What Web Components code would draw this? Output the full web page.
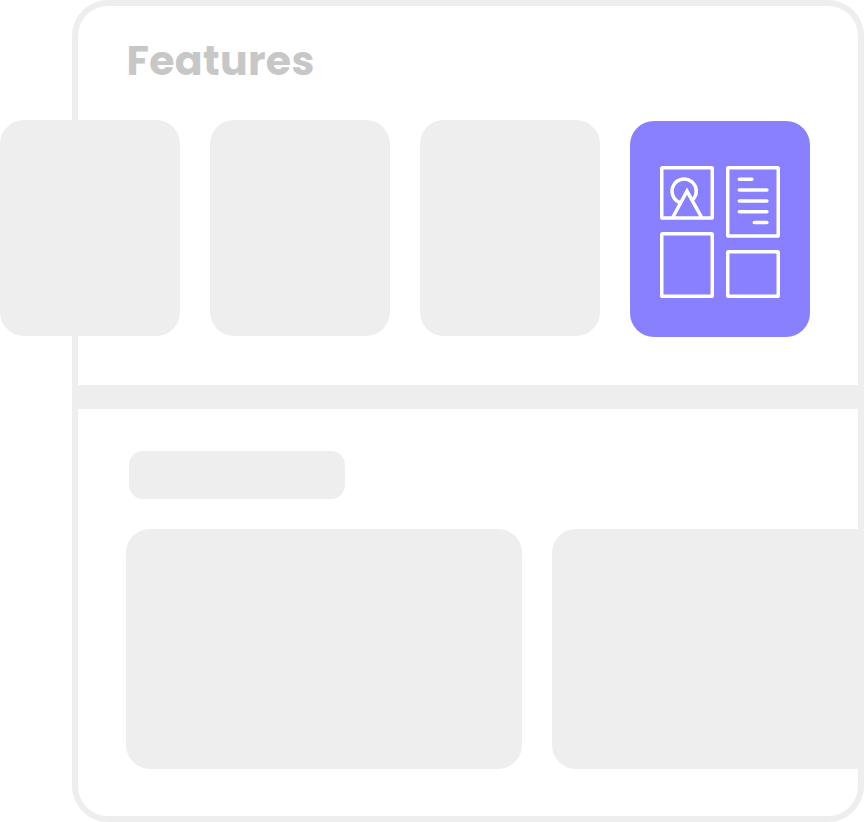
<!DOCTYPE html>
<html lang="en">
<head>
<meta charset="utf-8">
<title>Features</title>
<style>
html,body{margin:0;background:#fff}
body{width:864px;height:822px;overflow:hidden}
</style>
</head>
<body>
<app-frame>
  <feature-section slot="top" heading="Features">
    <place-holder style="--w:180px;--h:216px"></place-holder>
    <place-holder style="--w:180px;--h:216px"></place-holder>
    <place-holder style="--w:180px;--h:216px"></place-holder>
    <feature-card></feature-card>
  </feature-section>
  <content-section slot="bottom">
    <place-holder slot="title" style="--w:216px;--h:48px;--r:14px"></place-holder>
    <place-holder style="--w:396px;--h:240px"></place-holder>
    <place-holder style="--w:396px;--h:240px"></place-holder>
  </content-section>
</app-frame>
<script>
const define = (name, html) => customElements.define(name, class extends HTMLElement {
  connectedCallback() {
    if (this.shadowRoot) return;
    this.attachShadow({ mode: 'open' }).innerHTML = html;
    const title = this.shadowRoot.querySelector('h1');
    if (title) title.textContent = this.getAttribute('heading');
  }
});

define('app-frame', `
<style>
:host{display:flex;flex-direction:column;box-sizing:border-box;width:792px;height:822px;margin-left:72px;border:6px solid #eee;border-radius:36px}
.top{height:379px}
.divider{height:23.6px;background:#eee}
.bottom{flex:1}
</style>
<div class="top"><slot name="top"></slot></div>
<div class="divider"></div>
<div class="bottom"><slot name="bottom"></slot></div>`);

define('place-holder', `
<style>
:host{display:block;flex:none;width:var(--w);height:var(--h);border-radius:var(--r,24px);background:#eee}
</style>`);

define('feature-section', `
<style>
:host{display:flex;flex-direction:column}
h1{margin:30px 0 0 48.4px;height:50px;font:700 41px/50px Poppins,Inter,"Open Sans",sans-serif;letter-spacing:.35px;color:#c7c7c7;white-space:nowrap}
.row{display:flex;gap:30px;margin:34px 0 0 -78px}
</style>
<h1></h1>
<div class="row"><slot></slot></div>`);

define('feature-card', `
<style>
:host{display:flex;flex:none;align-items:center;justify-content:center;width:180px;height:216px;margin-top:1px;border-radius:24px;background:#8980ff}
svg{display:block;width:120px;height:132px;margin-top:5px}
</style>
<svg viewBox="0 0 120 132" fill="none" stroke="#fff" stroke-width="3.5" stroke-linejoin="round" stroke-linecap="round">
<rect x="1.75" y="1.75" width="50.5" height="50.2" rx=".8"/>
<rect x="1.75" y="67.8" width="50.5" height="62.4" rx=".8"/>
<rect x="67.75" y="1.75" width="50.5" height="68.2" rx=".8"/>
<rect x="67.75" y="85.8" width="50.5" height="44.4" rx=".8"/>
<path d="M19.9 36.5A12.1 12.1 0 1 1 32.4 34M12.7 51.5 27 25.2 41.7 51.5" stroke-linejoin="miter"/>
<path d="M79.3 13.3H91.9M79.3 24.1H106.9M79.3 34.9H106.9M79.3 45.7H106.9M94.3 56.5H106.9"/>
</svg>`);

define('content-section', `
<style>
:host{display:flex;flex-direction:column;margin-right:-6px;overflow:hidden;padding-top:42.4px}
.title{margin-left:51px}
.row{display:flex;gap:30px;margin:30px 0 0 48px}
</style>
<div class="title"><slot name="title"></slot></div>
<div class="row"><slot></slot></div>`);
</script>
</body>
</html>
